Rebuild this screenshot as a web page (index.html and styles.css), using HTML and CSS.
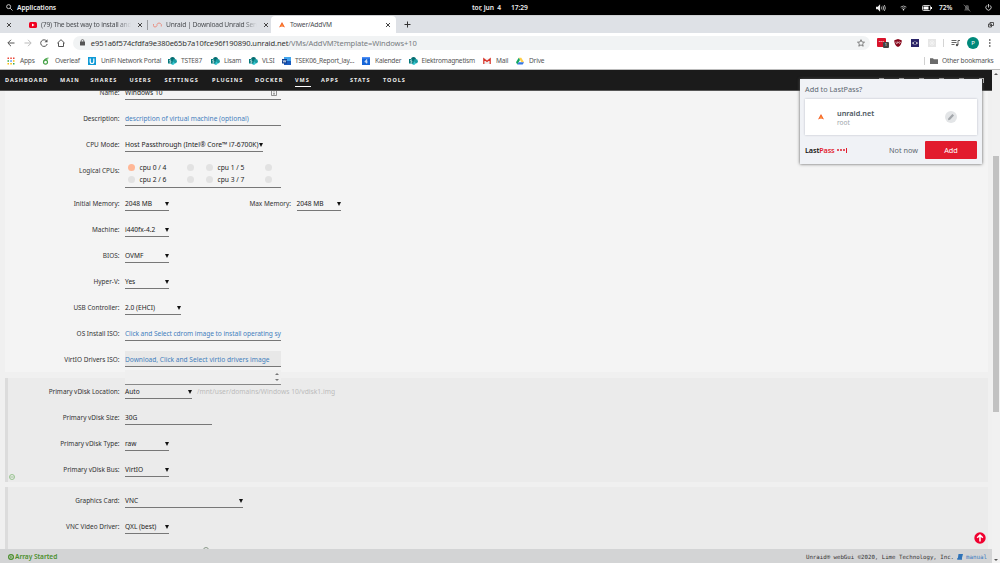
FILE: index.html
```html
<!DOCTYPE html>
<html lang="en">
<head>
<meta charset="utf-8">
<title>Tower/AddVM</title>
<link rel="stylesheet" href="styles.css">
</head>
<body>
<header class="desktop">
  <svg class="search" viewBox="0 0 8 8"><circle cx="3" cy="3" r="2.3" fill="none" stroke="#ddd"/><path d="M4.8 4.8 7.5 7.5" stroke="#ddd"/></svg>
  <span class="apps-label">Applications</span>
  <span class="date">tor, jun&nbsp; 4</span><span class="clock">17:29</span>
  <div class="tray">
    <svg class="vol" viewBox="0 0 11 8"><path d="M0 2.5h2L4.500 0v8L2 5.500H0z" fill="#eee"/><path d="M6 2.500q1 1.500 0 3M7.600 1.500q1.800 2.500 0 5M9.200.7q2.200 3.300 0 6.600" fill="none" stroke="#bbb"/></svg>
    <svg class="wifi" viewBox="0 0 8 6"><path d="M.7 2q3.300-2.600 6.600 0M2 3.500q2-1.500 4 0" fill="none" stroke="#bbb"/><circle cx="4" cy="5" r=".9" fill="#fff"/></svg>
    <svg class="bat" viewBox="0 0 10 6"><rect x=".5" y=".5" width="8" height="5" rx="1" fill="none" stroke="#ccc"/><path d="M1.500 1.500h5v3h-5zM9 2h1v2H9z" fill="#fff"/></svg>
    <span class="pct">72%</span>
    <svg class="bell" viewBox="0 0 8 8"><path d="M1 6.500h6L6 5V3Q6 1 4 1T2 3v2zM3.300 7h1.400" fill="#555"/><path d="M.7.7 7.300 7.500" stroke="#777" stroke-width=".8"/></svg>
    <svg class="power" viewBox="0 0 8 8"><path d="M2.300 1.500a3 3 0 1 0 3.400 0M4 0v4" fill="none" stroke="#ddd"/></svg>
  </div>
</header>

<div class="tabs">
  <div class="tab tab-first"><svg class="x" viewBox="0 0 6 6"><path d="M1 1l4 4M5 1 1 5"/></svg></div>
  <div class="tab tab-video">
    <svg class="yt" viewBox="0 0 8 6"><rect width="8" height="6" rx="1.500" fill="#f00020"/><path d="M3 1.500 5.500 3 3 4.500z" fill="#fff"/></svg>
    <span class="tab-title title-a">(79) The best way to install and</span>
    <svg class="x" viewBox="0 0 6 6"><path d="M1 1l4 4M5 1 1 5"/></svg>
  </div>
  <div class="tab tab-unraid">
    <svg class="wave" viewBox="0 0 9 6"><path d="M.5 2v1.500Q.5 5 2 5T4 3.500V2.500Q4.500 1 6 1t2.300 1.500V4.500" fill="none" stroke="#e98a7c" stroke-width=".9"/></svg>
    <span class="tab-title title-b">Unraid | Download Unraid Serv</span>
    <svg class="x" viewBox="0 0 6 6"><path d="M1 1l4 4M5 1 1 5"/></svg>
  </div>
  <div class="tab tab-active">
    <svg class="tri" viewBox="0 0 6 6"><path d="M3 0 6 5.500 3.800 4.500H2.200L0 5.500z" fill="#f15a24"/><path d="M2 2.500h2l.5 1.700h-3z" fill="#ff8c2f"/></svg>
    <span class="tab-title title-c">Tower/AddVM</span>
    <svg class="x" viewBox="0 0 6 6"><path d="M1 1l4 4M5 1 1 5"/></svg>
  </div>
  <svg class="plus" viewBox="0 0 7 7"><path d="M3.500.5v6M.5 3.500h6" stroke="#333"/></svg>
  <svg class="restore" viewBox="0 0 6 6"><path d="M2 .5h3.500v3H2zM.5 2h3v3h-3z" fill="none" stroke="#444" stroke-width=".9"/></svg>
</div>

<div class="toolbar">
  <svg class="nav-i" viewBox="0 0 8 8"><path d="M7.500 4H1M4 .8.8 4 4 7.200" fill="none" stroke="#555"/></svg>
  <svg class="nav-i" viewBox="0 0 8 8"><path d="M.5 4H7M4 .8 7.200 4 4 7.200" fill="none" stroke="#bbb"/></svg>
  <svg class="nav-i" viewBox="0 0 8 8"><path d="M6.700 2.200A3.300 3.300 0 1 0 7.200 5" fill="none" stroke="#555"/><path d="M7.500.3v3H4.500z" fill="#555"/></svg>
  <svg class="nav-i" viewBox="0 0 8 8"><path d="M.3 4.200 4 .7l3.700 3.500M1.500 3.500v4h5v-4" fill="none" stroke="#555"/></svg>
  <div class="omnibox">
    <svg class="lock" viewBox="0 0 5 7"><rect y="2.500" width="5" height="4" rx=".5" fill="#555"/><path d="M1.200 3V1.800Q1.200.6 2.500.6t1.300 1.200V3" fill="none" stroke="#555" stroke-width=".8"/></svg>
    <span class="url"><b>e951a6f574cfdfa9e380e65b7a10fce96f190890.unraid.net</b>/VMs/AddVM?template=Windows+10</span>
    <svg class="star" viewBox="0 0 8 8"><path d="m4 .7 1 2.300 2.500.2-1.900 1.600.6 2.400L4 5.900 1.800 7.200l.6-2.400L.5 3.200 3 3z" fill="none" stroke="#666" stroke-width=".8"/></svg>
  </div>
  <div class="ext lp">•••<i>1</i></div>
  <svg class="ub" viewBox="0 0 8 8"><path d="M4 0 7.700 1.200Q8 6 4 8 0 6 .3 1.200z" fill="#86061a"/><path d="M2 2.500v1.700q.8 1 1.600 0V2.500M5.500 2.800a.8.8 0 1 1-.1 0" fill="none" stroke="#fff" stroke-width=".6"/></svg>
  <svg class="eye" viewBox="0 0 8 8"><path d="M0 0h8v8H0z" fill="#2b2468"/><path d="M.8 4Q4 .8 7.200 4 4 7.200.8 4z" fill="#ddd"/><circle cx="4" cy="4" r="1.300" fill="#2b2468"/></svg>
  <svg class="pale" viewBox="0 0 8 8"><rect width="8" height="8" fill="#e6e6e6"/><path d="M2 2l4 4M6 2 2 6M4 1v6M1 4h6" stroke="#f5f5f5" stroke-width=".7"/></svg>
  <i class="sep"></i>
  <svg class="queue" viewBox="0 0 9 8"><path d="M.5 1.500h5M.5 3.500h5M.5 5.500h3M7 6V1.500h2" fill="none" stroke="#555" stroke-width=".9"/><circle cx="6" cy="6" r="1.200" fill="#555"/></svg>
  <div class="avatar">P</div>
  <svg class="dots" viewBox="0 0 2 8"><path d="M0 .3h1.500v1.500H0zM0 3.300h1.500v1.500H0zM0 6.300h1.500v1.500H0z" fill="#555"/></svg>
</div>

<div class="bookmarks">
  <div class="bm b1"><svg viewBox="0 0 8 8"><path d="M.5.5h1.500V2H.5zM3.300.5h1.500V2H3.300zM6 .5h1.500V2H6z" fill="#ea4335"/><path d="M.5 3.300h1.500v1.500H.5zM6 6h1.500v1.500H6z" fill="#34a853"/><path d="M3.300 3.300h1.500v1.500H3.300z" fill="#4285f4"/><path d="M6 3.300h1.500v1.500H6zM.5 6h1.500v1.500H.5zM3.300 6h1.500v1.500H3.300z" fill="#fbbc05"/></svg><span>Apps</span></div>
  <div class="bm b2"><svg viewBox="0 0 8 8"><circle cx="3.500" cy="5.200" r="2" fill="none" stroke="#46a247" stroke-width="1.200"/><path d="M1.700 4.500Q2.500 1.500 6.500 1M3.500 3.200l2-.6" fill="none" stroke="#46a247" stroke-width="1.100"/></svg><span>Overleaf</span></div>
  <div class="bm b3"><svg viewBox="0 0 8 8"><path d="M0 0h8v8H0z" fill="#0f9ad6"/><path d="M2.200 1.500v3q0 2 1.800 2t1.800-2v-3" fill="none" stroke="#fff" stroke-width="1.200"/></svg><span>UniFi Network Portal</span></div>
  <div class="bm b4 sp"><svg viewBox="0 0 9 8"><circle cx="4.500" cy="2.500" r="2.500" fill="#036c70"/><circle cx="6.700" cy="4.300" r="2.200" fill="#1a9ba1"/><circle cx="4.800" cy="6.300" r="1.700" fill="#37c6d0"/><path d="M0 2h4.500v4.500H0z" fill="#03787c"/><path d="M3 3H1.700v1.200h1.200v1.200H1.500" fill="none" stroke="#fff" stroke-width=".6"/></svg><span>TSTE87</span></div>
  <div class="bm b5 sp"><svg viewBox="0 0 9 8"><circle cx="4.500" cy="2.500" r="2.500" fill="#036c70"/><circle cx="6.700" cy="4.300" r="2.200" fill="#1a9ba1"/><circle cx="4.800" cy="6.300" r="1.700" fill="#37c6d0"/><path d="M0 2h4.500v4.500H0z" fill="#03787c"/><path d="M3 3H1.700v1.200h1.200v1.200H1.500" fill="none" stroke="#fff" stroke-width=".6"/></svg><span>Lisam</span></div>
  <div class="bm b6 sp"><svg viewBox="0 0 9 8"><circle cx="4.500" cy="2.500" r="2.500" fill="#036c70"/><circle cx="6.700" cy="4.300" r="2.200" fill="#1a9ba1"/><circle cx="4.800" cy="6.300" r="1.700" fill="#37c6d0"/><path d="M0 2h4.500v4.500H0z" fill="#03787c"/><path d="M3 3H1.700v1.200h1.200v1.200H1.500" fill="none" stroke="#fff" stroke-width=".6"/></svg><span>VLSI</span></div>
  <div class="bm b7 sp"><svg viewBox="0 0 9 8"><path d="M2 0h7v4H2z" fill="#41a5ee"/><path d="M2 4h7v4H2z" fill="#185abd"/><path d="M0 2h5v4.500H0z" fill="#103f91"/><path d="m1 3 .8 2.300L2.500 3.500l.7 1.800L4 3" fill="none" stroke="#fff" stroke-width=".6"/></svg><span>TSEK06_Report_lay...</span></div>
  <div class="bm b8"><svg viewBox="0 0 8 8"><path d="M0 0h8v8H0z" fill="#1565d8"/><path d="M0 0h8v1.500H0z" fill="#4c8df5"/><path d="M4.700 6.500v-4L2.800 5h2.700" fill="none" stroke="#fff" stroke-width=".8"/></svg><span>Kalender</span></div>
  <div class="bm b9 sp"><svg viewBox="0 0 9 8"><circle cx="4.500" cy="2.500" r="2.500" fill="#036c70"/><circle cx="6.700" cy="4.300" r="2.200" fill="#1a9ba1"/><circle cx="4.800" cy="6.300" r="1.700" fill="#37c6d0"/><path d="M0 2h4.500v4.500H0z" fill="#03787c"/><path d="M3 3H1.700v1.200h1.200v1.200H1.500" fill="none" stroke="#fff" stroke-width=".6"/></svg><span>Elektromagnetism</span></div>
  <div class="bm b10"><svg viewBox="0 0 8 8"><path d="M.5 1.500h7v5.500h-7z" fill="#eee"/><path d="M.8 7V1.700L4 4.500l3.200-2.800V7" fill="none" stroke="#d93025" stroke-width="1.200"/></svg><span>Mail</span></div>
  <div class="bm b11"><svg viewBox="0 0 8 8"><path d="M2.700.7h2.600L8 5.300H5.400z" fill="#ffcf48"/><path d="M2.700.7 4 3 1.300 7.500 0 5.300z" fill="#11a861"/><path d="M2.700 5.300H8L6.700 7.500H1.300z" fill="#3777e3"/></svg><span>Drive</span></div>
  <div class="bm other"><svg viewBox="0 0 8 8"><path d="M0 1.200h3l.8 1H8V7H0z" fill="#6b6b6b"/></svg><span>Other bookmarks</span></div>
</div>

<div class="viewport">
 <div class="page">
  <nav class="menu">
    <a class="m1">DASHBOARD</a><a class="m2">MAIN</a><a class="m3">SHARES</a><a class="m4">USERS</a><a class="m5">SETTINGS</a><a class="m6">PLUGINS</a><a class="m7">DOCKER</a><a class="m8 on">VMS</a><a class="m9">APPS</a><a class="m10">STATS</a><a class="m11">TOOLS</a>
    <div class="menu-icons"><i></i><i></i><i></i><i></i><i></i><i></i></div>
  </nav>
  <main class="content">
    <section class="basic">
      <div class="row"><label>Name:</label><div class="field wide">Windows 10<svg class="key" viewBox="0 0 6 7"><path d="M.5.5h5v6h-5zM3 2v.8M3 3.500V5M2 5h2" fill="none" stroke="#777" stroke-width=".8"/></svg></div></div>
      <div class="row"><label>Description:</label><div class="field wide hint"><span>description of virtual machine (optional)</span></div></div>
      <div class="row"><label>CPU Mode:</label><div class="field sel cpu"><span>Host Passthrough (Intel® Core™ i7-6700K)</span></div></div>
      <div class="row tall"><label>Logical CPUs:</label>
        <div class="field cpus">
          <i class="on"></i><span>cpu 0 / 4</span><i></i><i></i><span>cpu 1 / 5</span><i></i>
          <i></i><span>cpu 2 / 6</span><i></i><i></i><span>cpu 3 / 7</span><i></i>
        </div></div>
      <div class="row"><label>Initial Memory:</label><div class="field sel s44">2048 MB</div><label class="max">Max Memory:</label><div class="field sel s44">2048 MB</div></div>
      <div class="row"><label>Machine:</label><div class="field sel s44">i440fx-4.2</div></div>
      <div class="row"><label>BIOS:</label><div class="field sel s44">OVMF</div></div>
      <div class="row"><label>Hyper-V:</label><div class="field sel s44">Yes</div></div>
      <div class="row"><label>USB Controller:</label><div class="field sel s56">2.0 (EHCI)</div></div>
      <div class="row"><label>OS Install ISO:</label><div class="field wide hint iso"><span>Click and Select cdrom image to install operating sy</span></div></div>
      <div class="row"><label>VirtIO Drivers ISO:</label><div class="field wide hint focus"><span>Download, Click and Select virtio drivers image</span></div></div>
      <div class="picker"><i class="up"></i><i class="down"></i></div>
    </section>
    <section class="group disk">
      <div class="row"><label>Primary vDisk Location:</label><div class="field sel s67">Auto</div><span class="path">/mnt/user/domains/Windows 10/vdisk1.img</span></div>
      <div class="row"><label>Primary vDisk Size:</label><div class="field s87">30G</div></div>
      <div class="row"><label>Primary vDisk Type:</label><div class="field sel s44">raw</div></div>
      <div class="row"><label>Primary vDisk Bus:</label><div class="field sel s44">VirtIO</div></div>
      <svg class="add-disk" viewBox="0 0 6 6"><circle cx="3" cy="3" r="2.500" fill="none" stroke="#8fbf86" stroke-width=".9"/><path d="M1.300 3h3.400" stroke="#8fbf86" stroke-width=".8"/></svg>
    </section>
    <section class="group gfx">
      <div class="row"><label>Graphics Card:</label><div class="field sel s118">VNC</div></div>
      <div class="row"><label>VNC Video Driver:</label><div class="field sel s44">QXL (best)</div></div>
      <i class="peek"></i>
    </section>
    <svg class="totop" viewBox="0 0 12 12"><circle cx="6" cy="6" r="5.700" fill="#f0002f"/><path d="M6 9.500V3M3.200 5.800 6 3l2.800 2.800" fill="none" stroke="#fff" stroke-width="1.500"/></svg>
  </main>
  <footer class="status">
    <svg class="play" viewBox="0 0 6 6"><circle cx="3" cy="3" r="2.400" fill="none" stroke="#4a8f2c" stroke-width="1.200"/><path d="M2.300 1.700 4.300 3l-2 1.300z" fill="#4a8f2c"/></svg>
    <b>Array Started</b>
    <span class="copy">Unraid® webGui ©2020, Lime Technology, Inc.</span>
    <svg class="book" viewBox="0 0 6 6"><path d="M1.500 0H6L4.800 4.500H.8zM0 4.300h5v1.500H.3z" fill="#2f73b8"/></svg>
    <span class="manual">manual</span>
  </footer>
 </div>
 <div class="scroll"><i class="s-up"></i><i class="thumb"></i><i class="s-down"></i></div>
</div>

<aside class="lastpass">
  <h2>Add to LastPass?</h2>
  <div class="card">
    <svg class="site" viewBox="0 0 6 6"><path d="M3 0 6 5.500 3.800 4.500H2.200L0 5.500z" fill="#f15a24"/><path d="M2 2.500h2l.5 1.700h-3z" fill="#ff8c2f"/></svg>
    <div class="who"><strong>unraid.net</strong><small>root</small></div>
    <svg class="edit" viewBox="0 0 12 12"><circle cx="6" cy="6" r="6" fill="#e3e5e7"/><path d="M4 8.200 8.200 3.800" stroke="#a2a6aa" stroke-width="2.300"/><path d="M3 9.200 3.400 7.200 5 8.700z" fill="#a2a6aa"/></svg>
  </div>
  <div class="actions"><div class="brand"><b>Last</b><span>Pass</span><i></i><i></i><i></i><u></u></div><span class="later">Not now</span><button>Add</button></div>
</aside>
</body>
</html>
```
FILE: styles.css
```css
* { box-sizing: border-box; }
body { margin: 0; width: 1000px; height: 563px; overflow: hidden; position: relative; display: flex; flex-direction: column; font: 7px/10px "Noto Sans", sans-serif; color: #333; background: #fff; }
svg { flex: none; display: block; }
span, label, a, b { white-space: nowrap; }

.desktop { height: 15px; flex: none; background: #000; color: #eee; display: flex; align-items: center; padding-left: 6px; font-weight: 600; font-size: 6.700px; letter-spacing: -.1px; }
.search { width: 7px; height: 7px; margin-right: 4px; }
.apps-label { width: 455px; }
.date { width: 39px; }
.clock { width: 20px; }
.tray { margin-left: auto; display: flex; align-items: center; padding-right: 8px; }
.vol { width: 10px; height: 8px; margin-right: 14px; }
.wifi { width: 7px; height: 6px; margin-right: 15px; }
.bat { width: 10px; height: 6px; margin-right: 7px; }
.pct { width: 24px; }
.bell { width: 8px; height: 8px; margin-right: 14px; }
.power { width: 7px; height: 7px; }

.tabs { height: 18px; flex: none; background: #dee1e6; display: flex; align-items: center; font-size: 6.700px; letter-spacing: -.2px; color: #4a4d51; border-top: 1px solid #cfd1d4; }
.tab { height: 17px; display: flex; align-items: center; flex: none; }
.x { width: 6px; height: 6px; stroke: #444; fill: none; }
.tab-first { width: 29px; padding-left: 6px; }
.tab-video { width: 118px; }
.yt { width: 8px; height: 6px; margin-right: 4px; }
.tab-title { margin-right: 6px; }
.title-a { width: 90px; -webkit-mask-image: linear-gradient(90deg, #000 85%, transparent); }
.tab-unraid { width: 124px; border-left: 1px solid #9a9ca0; height: 10px; padding-left: 5px; }
.wave { width: 9px; height: 6px; margin-right: 4px; }
.title-b { width: 91px; -webkit-mask-image: linear-gradient(90deg, #000 85%, transparent); }
.tab-active { width: 125px; background: #fff; border-radius: 4px 4px 0 0; padding-left: 8px; }
.tri { width: 6px; height: 6px; margin-right: 5px; }
.title-c { width: 90px; margin-right: 5px; }
.plus { width: 7px; height: 7px; margin-left: 8px; }
.restore { width: 6px; height: 6px; margin-left: auto; margin-right: 6px; }

.toolbar { height: 18px; flex: none; display: flex; align-items: center; padding: 1px 9px 0 7px; }
.nav-i { width: 8px; height: 8px; margin-right: 8.700px; }
.omnibox { flex: 1; height: 14px; margin-left: -1px; border-radius: 7px; background: #f1f3f4; display: flex; align-items: center; padding: 0 5px 0 7px; color: #777b80; font-size: 7.550px; letter-spacing: -.08px; }
.lock { width: 5px; height: 7px; margin-right: 6px; }
.url b { font-weight: 400; color: #333; }
.star { width: 8px; height: 8px; margin-left: auto; }
.ext { position: relative; width: 9px; height: 9px; flex: none; margin-left: 7px; background: #d9142b; color: #fff; font-size: 4px; line-height: 8px; text-align: center; border-radius: 1px; letter-spacing: .3px; }
.ext i { position: absolute; left: 6px; top: 4px; width: 6px; height: 6px; background: #444; font: 4px/6px "Noto Sans", sans-serif; border-radius: 1px; }
.ub { width: 8px; height: 8px; margin-left: 8px; }
.eye { width: 8px; height: 8px; margin-left: 9px; }
.pale { width: 8px; height: 8px; margin-left: 9px; }
.sep { width: 1px; height: 8px; background: #d4d4d4; margin: 0 7px; }
.queue { width: 9px; height: 8px; }
.avatar { width: 12px; height: 12px; border-radius: 50%; background: #00897b; color: #fff; text-align: center; line-height: 12px; font-size: 6px; margin-left: 7px; flex: none; }
.dots { width: 2px; height: 8px; margin-left: 10px; }

.bookmarks { position: relative; height: 19px; flex: none; display: flex; align-items: center; border-bottom: 1px solid #bbb; color: #555; font-size: 6.600px; letter-spacing: -.2px; padding: 1px 0 0 7px; }
.bm { display: flex; align-items: center; flex: none; }
.bm svg { width: 8px; height: 8px; margin-right: 5px; }
.bm.sp svg { width: 9px; margin-right: 4px; }
.b1 { width: 35px; } .b2 { width: 46px; } .b3 { width: 80px; } .b4 { width: 43px; } .b5 { width: 38px; } .b6 { width: 33px; } .b7 { width: 80px; } .b8 { width: 46.500px; } .b9 { width: 74.500px; } .b10 { width: 33px; }
.bm.other { position: relative; margin-left: auto; border-left: 1px solid #d0d0d0; height: 8px; padding-left: 5px; width: 76px; }
.bm.other svg { margin-right: 4px; }

.viewport { flex: 1; min-height: 0; display: flex; }
.page { width: 992px; display: flex; flex-direction: column; background: #f0f0f0; }
.menu { height: 21px; flex: none; background: #1b1b1b; color: #eee; display: flex; align-items: center; padding-left: 5px; font-weight: 700; font-size: 5.500px; letter-spacing: 1px; border-bottom: 1px solid #555; }
.menu a { line-height: 15px; height: 14px; flex: none; }
.m1 { width: 55px; } .m2 { width: 30.500px; } .m3 { width: 39px; } .m4 { width: 35px; } .m5 { width: 47.500px; } .m6 { width: 43px; } .m7 { width: 40px; } .menu .m8 { width: 16px; margin-right: 10px; } .m9 { width: 29px; } .m10 { width: 33px; } .m11 { width: 30px; }
.menu .on { border-bottom: 1px solid #fff; }
.menu-icons { margin-left: auto; display: flex; gap: 15px; padding-right: 8px; }
.menu-icons i { width: 5px; height: 5px; border: 1px solid #bbb; border-bottom: 0; }
.content { position: relative; flex: 1; min-height: 0; overflow: hidden; padding-left: 5px; width: 988px; font-size: 6.600px; }
.basic { position: relative; background: #f4f4f4; margin-top: -12px; height: 293px; }
.row { height: 26px; display: flex; align-items: center; }
.row label { width: 114.500px; text-align: right; flex: none; margin-right: 5.500px; padding-top: 1px; font-size: 6.450px; }
.field { position: relative; height: 16px; line-height: 17px; border-bottom: 1px solid #777; white-space: nowrap; flex: none; color: #222; }
.wide { width: 156px; } .s44 { width: 44px; } .s56 { width: 56px; } .s67 { width: 67px; } .s87 { width: 87px; } .s118 { width: 118px; } .cpu { width: 138px; font-size: 6.750px; }
.sel::after { content: ""; position: absolute; right: 0; top: 7px; border: 2px solid transparent; border-top: 4px solid #111; border-bottom: 0; }
.hint { color: #4480bd; }
.iso { letter-spacing: -.06px; }
.focus { background: #e8e8e8; }
.key { position: absolute; right: 4px; top: 5px; width: 6px; height: 7px; }
.tall { height: 33px; align-items: flex-start; }
.tall label { line-height: 26px; }
.cpus { margin-top: 5px; width: 156px; height: 26px; display: grid; grid-template-columns: 11.500px 47px 19.500px 11.500px 47px 8px; grid-template-rows: 11.500px 11.500px; padding-left: 3px; align-items: center; line-height: 11px; font-size: 6.700px; }
.cpus i { width: 7px; height: 7px; border-radius: 50%; background: #e2e2e2; }
.cpus .on { background: #ffb796; }
.row .max { width: 122px; }
.picker { position: absolute; z-index: 2; left: 120px; top: 291px; width: 156px; height: 15px; background: #efefef; border-bottom: 1px solid #888; }
.picker i { position: absolute; right: 2px; border: 2px solid transparent; }
.picker .up { top: 1px; border-bottom-color: #777; }
.picker .down { bottom: 1px; border-top-color: #777; }
.group { position: relative; background: #ebebeb; border-left: 3px solid #dcdcdc; margin-top: 6px; height: 104px; }
.row .path { color: #bbb; margin-left: 5px; font-size: 6.700px; padding-top: 1px; }
.group .row label { width: 111.500px; }
.add-disk { position: absolute; left: 1px; bottom: 2px; width: 6px; height: 6px; }
.gfx { height: 70px; }
.gfx .row:first-child { margin-top: -1px; }
.peek { position: absolute; left: 195px; top: 60px; width: 6px; height: 6px; border: 1px solid #8a9a8a; border-radius: 50%; }
.totop { position: absolute; right: 2px; bottom: 5px; width: 12px; height: 12px; }
.status { height: 14px; flex: none; background: #d3d4d5; display: flex; align-items: center; padding: 1px 5px 0 8px; }
.play { width: 6px; height: 6px; margin-right: 1px; }
.status b { color: #4a8f2c; font-weight: 600; font-size: 6.600px; letter-spacing: -.05px; }
.copy { margin-left: auto; font: 5.720px "DejaVu Sans Mono", monospace; margin-right: 3px; }
.book { width: 6px; height: 6px; margin-right: 3px; }
.manual { font: 5.800px "DejaVu Sans Mono", monospace; color: #3a7abf; }
.scroll { position: relative; width: 8px; background: #f1f1f1; }
.scroll i { position: absolute; }
.s-up { left: 2px; top: 1px; border: 2px solid transparent; border-bottom: 2px solid #555; }
.s-down { left: 2px; bottom: 2px; border: 2px solid transparent; border-top: 2px solid #555; border-bottom: 0; }
.thumb { left: 1px; top: 86px; width: 6px; height: 256px; background: #c1c1c1; }

.lastpass { position: absolute; z-index: 5; left: 800px; top: 79px; width: 182px; height: 85px; background: #f0f2f6; box-shadow: 0 0 3px #555; padding: 5px; color: #5b6670; }
.lastpass h2 { margin: 0; font-size: 7.300px; line-height: 11px; font-weight: 400; }
.card { margin-top: 4px; height: 36px; width: 172px; background: #fff; box-shadow: 0 0 2px #b8bcc4; display: flex; align-items: center; padding-left: 13px; }
.site { width: 6px; height: 6px; margin-right: 13px; }
.who { width: 108px; display: flex; flex-direction: column; }
.who strong { font-size: 7.300px; font-weight: 600; line-height: 10px; color: #4b5660; }
.who small { font-size: 6.500px; line-height: 9px; color: #9da5ab; }
.edit { width: 12px; height: 12px; }
.actions { display: flex; align-items: center; margin-top: 6px; height: 18px; font-size: 7.300px; }
.brand { width: 84px; display: flex; align-items: center; letter-spacing: -.15px; }
.brand b { color: #111; font-weight: 600; }
.brand span { color: #e21b2d; font-weight: 600; margin-right: 2px; }
.brand i { width: 2px; height: 2px; border-radius: 1px; background: #e21b2d; margin-right: 1px; }
.brand u { width: 1px; height: 5px; background: #e21b2d; }
.later { width: 36px; }
.actions button { width: 52px; height: 18px; border: 0; border-radius: 1px; padding: 0; background: #e21b2d; color: #fff; font: 7.300px "Noto Sans", sans-serif; }
```
